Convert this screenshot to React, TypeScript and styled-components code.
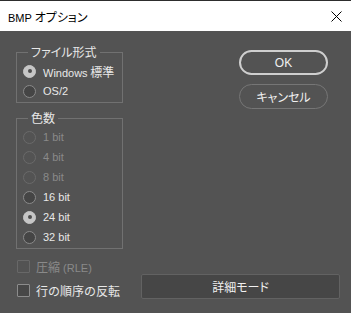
import React from 'react';
import styled, { createGlobalStyle } from 'styled-components';

const GlobalStyle = createGlobalStyle`
  html, body {
    margin: 0;
    padding: 0;
    background: #535353;
  }
  * {
    box-sizing: border-box;
  }
`;

const Dialog = styled.div`
  width: 351px;
  height: 313px;
  background: #535353;
  font-family: 'Liberation Sans', 'Noto Sans CJK JP', sans-serif;
  font-size: 11px;
  color: #e8e8e8;
  overflow: hidden;
`;

const TitleBar = styled.div`
  height: 31px;
  background: #ffffff;
  border-top: 1px solid #2d2d2d;
  display: flex;
  align-items: center;
  padding-left: 8px;
  color: #000;
`;

const TitleText = styled.div`
  flex: 1;
`;

const CloseButton = styled.div`
  width: 30px;
  height: 30px;
  margin-right: 0;
  display: flex;
  align-items: center;
  justify-content: center;
`;

const Ja = styled.span<{ $palt?: boolean }>`
  font-family: 'Noto Sans CJK JP', sans-serif;
  font-size: 12px;
  font-feature-settings: ${(p) => (p.$palt ? "'palt'" : 'normal')};
`;

const Body = styled.div`
  padding: 14px 0 0 16px;
`;

const TopRow = styled.div`
  display: flex;
  align-items: flex-start;
`;

const LeftCol = styled.div`
  display: flex;
  flex-direction: column;
  gap: 8px;
  width: 107px;
`;

const Group = styled.fieldset`
  margin: 0;
  width: 107px;
  border: 1px solid #717171;
  padding: 1px 0 1px 6px;
  min-width: 0;
`;

const Legend = styled.legend`
  padding: 0 3px;
  margin-left: 5px;
  line-height: 14px;
  color: #e8e8e8;
`;

const RadioRow = styled.div<{ $disabled?: boolean }>`
  height: 20px;
  display: flex;
  align-items: center;
  gap: 7px;
  color: ${(p) => (p.$disabled ? '#8a8a8a' : '#e8e8e8')};
`;

const RadioCircle = styled.span<{ $checked?: boolean; $disabled?: boolean }>`
  width: 13px;
  height: 13px;
  border-radius: 50%;
  flex: none;
  display: flex;
  align-items: center;
  justify-content: center;
  border: 1px solid
    ${(p) => (p.$checked ? '#c6c6c6' : p.$disabled ? '#6a6a6a' : '#8a8a8a')};
  background: ${(p) => (p.$checked ? '#c6c6c6' : p.$disabled ? 'transparent' : '#454545')};

  &::after {
    content: '';
    display: ${(p) => (p.$checked ? 'block' : 'none')};
    width: 4px;
    height: 4px;
    border-radius: 50%;
    background: #4e4e4e;
  }
`;

const ButtonCol = styled.div`
  display: flex;
  flex-direction: column;
  gap: 9px;
  padding-top: 5px;
  margin-left: 116px;
`;

const PillButton = styled.div<{ $primary?: boolean }>`
  width: 89px;
  height: 25px;
  border-radius: 13px;
  display: flex;
  align-items: center;
  justify-content: center;
  border: ${(p) => (p.$primary ? '2px solid #cfcfcf' : '1px solid #767676')};
  color: #f0f0f0;
  font-size: 12px;
`;

const BottomRow = styled.div`
  display: flex;
  align-items: flex-end;
  margin-top: 5px;
`;

const CheckCol = styled.div`
  width: 125px;
  display: flex;
  flex-direction: column;
`;

const CheckRow = styled.div<{ $disabled?: boolean }>`
  height: 24px;
  display: flex;
  align-items: center;
  gap: 6px;
  padding-left: 1px;
  color: ${(p) => (p.$disabled ? '#8a8a8a' : '#e8e8e8')};
`;

const CheckBox = styled.span<{ $disabled?: boolean }>`
  width: 13px;
  height: 13px;
  flex: none;
  border-radius: 1px;
  border: 1px solid ${(p) => (p.$disabled ? '#686868' : '#8c8c8c')};
  background: ${(p) => (p.$disabled ? 'transparent' : '#474747')};
`;

const DetailButton = styled.div`
  width: 199px;
  height: 25px;
  margin-bottom: 3px;
  border: 1px solid #626262;
  border-radius: 2px;
  background: #464646;
  display: flex;
  align-items: center;
  justify-content: center;
  color: #f0f0f0;
`;

const formats = [
  { label: 'Windows', ja: '標準', checked: true },
  { label: 'OS/2', checked: false },
];

const depths = [
  { label: '1 bit', disabled: true },
  { label: '4 bit', disabled: true },
  { label: '8 bit', disabled: true },
  { label: '16 bit' },
  { label: '24 bit', checked: true },
  { label: '32 bit' },
];

export default function App() {
  return (
    <Dialog>
      <GlobalStyle />
      <TitleBar>
        <TitleText>
          BMP <Ja $palt>オプション</Ja>
        </TitleText>
        <CloseButton>
          <svg width="11" height="11" viewBox="0 0 11 11">
            <path d="M0.5 0.5 L10.5 10.5 M10.5 0.5 L0.5 10.5" stroke="#000" strokeWidth="1" />
          </svg>
        </CloseButton>
      </TitleBar>
      <Body>
        <TopRow>
          <LeftCol>
            <Group>
              <Legend>
                <Ja $palt>ファイル形式</Ja>
              </Legend>
              {formats.map((f) => (
                <RadioRow key={f.label}>
                  <RadioCircle $checked={f.checked} />
                  <span>
                    {f.label}
                    {f.ja && <Ja> {f.ja}</Ja>}
                  </span>
                </RadioRow>
              ))}
            </Group>
            <Group>
              <Legend>
                <Ja>色数</Ja>
              </Legend>
              {depths.map((d) => (
                <RadioRow key={d.label} $disabled={d.disabled}>
                  <RadioCircle $checked={d.checked} $disabled={d.disabled} />
                  <span>{d.label}</span>
                </RadioRow>
              ))}
            </Group>
          </LeftCol>
          <ButtonCol>
            <PillButton $primary>OK</PillButton>
            <PillButton>
              <Ja $palt>キャンセル</Ja>
            </PillButton>
          </ButtonCol>
        </TopRow>
        <BottomRow>
          <CheckCol>
            <CheckRow $disabled>
              <CheckBox $disabled />
              <span>
                <Ja>圧縮</Ja> (RLE)
              </span>
            </CheckRow>
            <CheckRow>
              <CheckBox />
              <Ja>行の順序の反転</Ja>
            </CheckRow>
          </CheckCol>
          <DetailButton>
            <Ja $palt>詳細モード</Ja>
          </DetailButton>
        </BottomRow>
      </Body>
    </Dialog>
  );
}
